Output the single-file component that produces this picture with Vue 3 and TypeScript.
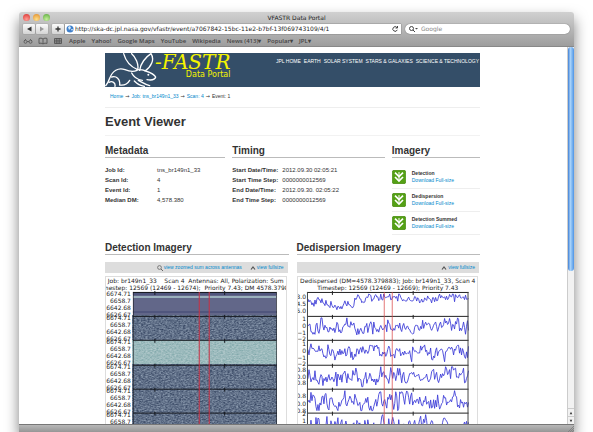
<script setup lang="ts">
interface TraceRow {
  top: number
  base: number
  amp: number
  seed: number
}

interface AxisLabel {
  y: number
  text: string
}

const bookmarks: string[] = ['Apple', 'Yahoo!', 'Google Maps', 'YouTube', 'Wikipedia', 'News (413)▾', 'Popular▾', 'JPL▾']
const siteLinks: string[] = ['JPL HOME', 'EARTH', 'SOLAR SYSTEM', 'STARS & GALAXIES', 'SCIENCE & TECHNOLOGY']

const metadata = [
  { label: 'Job Id:', value: 'tns_br149n1_33' },
  { label: 'Scan Id:', value: '4' },
  { label: 'Event Id:', value: '1' },
  { label: 'Median DM:', value: '4,578.380' },
]

const timing = [
  { label: 'Start Date/Time:', value: '2012.09.30 02:05:21' },
  { label: 'Start Time Step:', value: '0000000012569' },
  { label: 'End Date/Time:', value: '2012.09.30. 02:05:22' },
  { label: 'End Time Step:', value: '0000000012569' },
]

const downloads: string[] = ['Detection', 'Dedispersion', 'Detection Summed']

const detectionTitle: string[] = [
  'Job: br149n1_33    Scan 4  Antennas: All, Polarization: Sum',
  'mestep: 12569 (12469 - 12674);  Priority 7.43; DM 4578.3798',
]

const bandTops: number[] = [15, 39, 63, 88, 112, 136]
const bandLabels: AxisLabel[] = bandTops.flatMap((top) => [
  { y: top + 4, text: '6674.71' },
  { y: top + 11, text: '6658.7' },
  { y: top + 18, text: '6642.68' },
  { y: top + 25, text: '6626.67' },
])

const traceRows: TraceRow[] = [
  { top: 15, base: 12, amp: 5, seed: 11 },
  { top: 39, base: 11, amp: 9, seed: 27 },
  { top: 63, base: 12, amp: 8, seed: 35 },
  { top: 88, base: 12, amp: 10, seed: 48 },
  { top: 112, base: 13, amp: 12, seed: 59 },
  { top: 136, base: 14, amp: 12, seed: 63 },
]

const traceLabels: AxisLabel[] = [
  { y: 22, text: '3.0' }, { y: 29, text: '4.5' }, { y: 36, text: '5.0' },
  { y: 44, text: '1' }, { y: 51, text: '0' }, { y: 58, text: '−1' }, { y: 64, text: '−2' },
  { y: 69, text: '1' }, { y: 76, text: '0' }, { y: 83, text: '−1' }, { y: 89, text: '−2' },
  { y: 95, text: '0.8' }, { y: 102, text: '0.0' }, { y: 108, text: '−0.8' },
  { y: 121, text: '0.8' }, { y: 129, text: '0.0' }, { y: 136, text: '−0.8' },
  { y: 139, text: '2' }, { y: 146, text: '1' },
]

function tracePoints(row: TraceRow, index: number): string {
  let state = row.seed * 7919
  const random = (): number => {
    state = (state * 16807) % 2147483647
    return state / 2147483647
  }
  const points: string[] = []
  let previous = 0
  for (let x = 0; x <= 161; x += 1) {
    const value = (random() + random() + random() - 1.5) * row.amp
    previous = previous * 0.3 + value * 0.9
    let drift = 0
    if (index === 0) {
      drift = x < 47 ? Math.min(2, x / 8 - 2) : -5 + Math.sin(x / 14)
    }
    const offset = Math.max(2, Math.min(22, row.base + previous + drift))
    points.push(`${x + 10},${(row.top + offset).toFixed(1)}`)
  }
  return points.join(' ')
}

const traces: string[] = traceRows.map(tracePoints)
</script>

<template>
  <div class="desktop">
    <div class="window">
      <header class="chrome">
        <div class="titlebar">
          <div class="lights">
            <button class="light red" aria-label="Close"></button>
            <button class="light amber" aria-label="Minimize"></button>
            <button class="light green" aria-label="Zoom"></button>
          </div>
          <div class="window-title">VFASTR Data Portal</div>
        </div>
        <div class="toolbar">
          <div class="nav-buttons">
            <button class="tool" aria-label="Back"><svg viewBox="0 0 12 10"><path d="M8.500 2.500v5L4 5z" fill="#333" /></svg></button>
            <button class="tool" aria-label="Forward"><svg viewBox="0 0 12 10"><path d="M4 2.500v5L8 5z" fill="#999" /></svg></button>
          </div>
          <button class="tool add" aria-label="Add bookmark"><svg viewBox="0 0 12 10"><path d="M6 2.500v5M3.500 5h5" stroke="#333" stroke-width="1.300" /></svg></button>
          <div class="address">
            <svg class="globe" viewBox="0 0 8 8"><circle cx="4" cy="4" r="3.500" fill="#3f80cc" /><path d="M2 2l2-1 1 2-2 2zM5 4l2 0-1 2z" fill="#d9ecfa" /></svg>
            <input type="text" aria-label="Address" value="http://ska-dc.jpl.nasa.gov/vfastr/event/a7067842-15bc-11e2-b7bf-13f069743109/4/1" />
            <button class="reload" aria-label="Reload"><svg viewBox="0 0 8 8"><path d="M6 2.600A2.300 2.300 0 1 0 6.300 4.800M6.500 1v2H4.500" fill="none" stroke="#444" stroke-width="1" /></svg></button>
          </div>
          <div class="search">
            <svg viewBox="0 0 10 8"><circle cx="3.500" cy="3.500" r="2" fill="none" stroke="#444" /><path d="M5 5l2 2" stroke="#444" /><path d="M7 3h3L8.500 4.500z" fill="#444" /></svg>
            <input type="search" aria-label="Search" placeholder="Google" />
          </div>
        </div>
        <nav class="bookmarks">
          <svg class="mark-icon" viewBox="0 0 10 8"><path d="M1 4l2-2M9 4L7 2M4 4.500h2" fill="none" stroke="#555" stroke-width=".8" /><circle cx="2.500" cy="4.800" r="1.500" fill="none" stroke="#555" stroke-width=".8" /><circle cx="7.500" cy="4.800" r="1.500" fill="none" stroke="#555" stroke-width=".8" /></svg>
          <svg class="mark-icon" viewBox="0 0 10 8"><path d="M5 2C4 1 2 1 1 1.500v5C2 6 4 6 5 7c1-1 3-1 4-.5v-5C8 1 6 1 5 2zv5" fill="none" stroke="#555" stroke-width=".9" /></svg>
          <svg class="mark-icon" viewBox="0 0 10 8"><path d="M1.500 1.500h7v5h-7zM1.500 3.200h7M1.500 4.900h7M3.800 1v6M6.200 1v6" fill="none" stroke="#555" stroke-width=".9" /></svg>
          <a v-for="mark in bookmarks" :key="mark" href="#">{{ mark }}</a>
        </nav>
      </header>

      <div class="viewport">
        <main class="page">
          <div class="container">
            <div class="banner">
              <svg class="rabbit" viewBox="0 0 156 102" role="img" aria-label="Rabbit logo">
                <g fill="none" stroke="#fff" stroke-width="4" stroke-linecap="round" stroke-linejoin="round">
                  <path d="M56 2C62 24 78 42 98 50C102 34 92 12 80 2" />
                  <path d="M104 52C106 32 122 12 138 2C150 20 138 42 120 54" />
                  <path d="M96 50C104 50 114 50 122 54C134 58 148 64 152 72C150 80 138 82 126 80" />
                  <path d="M96 52C84 58 74 56 60 50C40 42 22 54 14 76C10 88 6 94 2 98" />
                  <path d="M20 72C34 68 46 78 44 94M12 88C22 82 32 90 30 100M44 96C56 98 68 92 74 82" />
                  <path d="M80 60C86 72 98 80 112 82M100 82C112 88 120 94 134 98M88 84C96 92 106 98 118 100" />
                </g>
                <circle cx="130" cy="65" r="3" fill="#fff" />
              </svg>
              <div class="brand">
                <span class="brand-name">-FASTR</span>
                <span class="brand-sub">Data Portal</span>
              </div>
              <nav class="site-links">
                <a v-for="link in siteLinks" :key="link" href="#">{{ link }}</a>
              </nav>
            </div>

            <nav class="crumbs">
              <a href="#">Home</a><span class="arrow">→</span>
              <a href="#">Job: tns_br149n1_33</a><span class="arrow">→</span>
              <a href="#">Scan: 4</a><span class="arrow">→</span>
              <span>Event: 1</span>
            </nav>

            <h1>Event Viewer</h1>

            <div class="details">
              <section>
                <h2>Metadata</h2>
                <dl class="meta-list">
                  <template v-for="item in metadata" :key="item.label">
                    <dt>{{ item.label }}</dt>
                    <dd>{{ item.value }}</dd>
                  </template>
                </dl>
              </section>
              <section>
                <h2>Timing</h2>
                <dl class="time-list">
                  <template v-for="item in timing" :key="item.label">
                    <dt>{{ item.label }}</dt>
                    <dd>{{ item.value }}</dd>
                  </template>
                </dl>
              </section>
              <section>
                <h2>Imagery</h2>
                <ul class="downloads">
                  <li v-for="name in downloads" :key="name">
                    <svg viewBox="0 0 42 42"><rect x="1" y="1" width="40" height="40" rx="5" fill="#54a015" stroke="#418508" stroke-width="2" /><path d="M9 8l12 12L33 8M9 21l12 12 12-12" fill="none" stroke="#fff" stroke-width="5" /><path d="M21 6v24" stroke="#fff" stroke-width="3" /></svg>
                    <div><strong>{{ name }}</strong><a href="#">Download Full-size</a></div>
                  </li>
                </ul>
              </section>
            </div>

            <div class="plots">
              <section>
                <h2>Detection Imagery</h2>
                <div class="plot-tools">
                  <a href="#"><svg viewBox="0 0 6 6"><circle cx="2.500" cy="2.500" r="1.900" fill="none" stroke="#666" stroke-width=".8" /><path d="M4 4l2 2" stroke="#666" /></svg>view zoomed sum across antennas</a>
                  <a href="#"><svg viewBox="0 0 6 6"><path d="M1 4.500l2-2.500 2 2.500" fill="none" stroke="#555" stroke-width="1.200" /></svg>view fullsize</a>
                </div>
                <div class="plot">
                  <svg viewBox="0 0 180 160" role="img" aria-label="Detection spectrogram">
                    <defs>
                      <filter id="grain" x="0" y="0" width="1" height="1" color-interpolation-filters="sRGB">
                        <feTurbulence type="fractalNoise" baseFrequency="0.45 0.8" numOctaves="2" seed="4" />
                        <feColorMatrix values="0.5 0 0 0 0.13  0.5 0 0 0 0.19  0.45 0 0 0 0.31  0 0 0 0 1" />
                      </filter>
                      <filter id="pale-grain" x="0" y="0" width="1" height="1" color-interpolation-filters="sRGB">
                        <feTurbulence type="fractalNoise" baseFrequency="0.45 0.8" numOctaves="2" seed="9" />
                        <feColorMatrix values="0.3 0 0 0 0.46  0.2 0 0 0 0.63  0.2 0 0 0 0.64  0 0 0 0 1" />
                      </filter>
                    </defs>
                    <g class="plot-text">
                      <text v-for="(line, i) in detectionTitle" :key="line" x="90" :y="6 + i * 7" text-anchor="middle">{{ line }}</text>
                      <text v-for="(label, i) in bandLabels" :key="i" x="25" :y="label.y" text-anchor="end">{{ label.text }}</text>
                    </g>
                    <rect x="27" y="15" width="144" height="24" fill="#626789" />
                    <path d="M27 17h144M27 35h144" stroke="#50567d" stroke-width="2" />
                    <path d="M27 20h144" stroke="#9ab0bc" stroke-width="2" />
                    <rect x="27" y="39" width="144" height="130" filter="url(#grain)" />
                    <rect x="27" y="64" width="144" height="23" filter="url(#pale-grain)" />
                    <path v-for="top in bandTops" :key="top" :d="`M27 ${top}.500h144M49 ${top - 1}v4M119 ${top - 1}v4`" stroke="#16191f" fill="none" />
                    <path d="M27.500 15v150M171 15v150" stroke="#16191f" stroke-width=".6" />
                    <path d="M93.500 15v150M103.500 15v150" stroke="#cb3043" />
                  </svg>
                </div>
              </section>
              <section>
                <h2>Dedispersion Imagery</h2>
                <div class="plot-tools">
                  <a href="#"><svg viewBox="0 0 6 6"><path d="M1 4.500l2-2.500 2 2.500" fill="none" stroke="#555" stroke-width="1.200" /></svg>view fullsize</a>
                </div>
                <div class="plot">
                  <svg viewBox="0 0 180 160" role="img" aria-label="Dedispersed time series">
                    <g class="plot-text">
                      <text x="90" y="6" text-anchor="middle">Dedispersed (DM=4578.379883); Job: br149n1_33, Scan 4</text>
                      <text x="90" y="13" text-anchor="middle">Timestep: 12569 (12469 - 12669); Priority 7.43</text>
                      <text v-for="(label, i) in traceLabels" :key="i" x="8" :y="label.y" text-anchor="end">{{ label.text }}</text>
                    </g>
                    <polyline v-for="(points, i) in traces" :key="i" :points="points" fill="none" stroke="#4040d8" stroke-width=".9" />
                    <path v-for="top in bandTops" :key="top" :d="`M9 ${top}.500h162M34.500 ${top - 1}v4M115.500 ${top - 1}v4`" stroke="#222" fill="none" />
                    <path d="M9.500 15v150M170.500 15v150" stroke="#444" />
                    <path d="M86.500 15v150M94.500 15v150" stroke="#d94a4a" stroke-opacity=".75" />
                  </svg>
                </div>
              </section>
            </div>
          </div>
        </main>
        <div class="scrollbar">
          <div class="track"><div class="thumb"></div></div>
          <button aria-label="Scroll up"><svg viewBox="0 0 7 7"><path d="M2 5h3L3.500 2z" fill="#333" /></svg></button>
          <button aria-label="Scroll down"><svg viewBox="0 0 7 7"><path d="M2 2h3L3.500 5z" fill="#333" /></svg></button>
        </div>
      </div>
      <footer class="statusbar"><svg viewBox="0 0 8 8"><path d="M1 8l7-7M3 8l5-5M5 8l3-3" stroke="#777" stroke-width=".7" /></svg></footer>
    </div>
  </div>
</template>

<style>
body {
  margin: 0;
  background: #fff;
}
</style>

<style scoped>
.desktop {
  box-sizing: border-box;
  height: 100vh;
  padding: 12px 19px 0;
  overflow: hidden;
  font-family: "Liberation Sans", Arial, sans-serif;
  font-size: 6px;
  line-height: 10px;
  color: #333;
}
button {
  padding: 0;
  border: 0;
  background: none;
}
input {
  min-width: 0;
  flex: 1;
  padding: 0;
  border: 0;
  outline: 0;
  background: none;
  font: 6px/8px "DejaVu Sans", sans-serif;
  color: #222;
}
svg {
  display: block;
}
a {
  color: #0088cc;
  text-decoration: none;
}
.window {
  display: flex;
  flex-direction: column;
  height: 100%;
  border-radius: 3px 3px 0 0;
  overflow: hidden;
  background: #fff;
  box-shadow: 0 7px 14px rgba(0, 0, 0, 0.5);
}
.chrome {
  flex: none;
  background: linear-gradient(#d0d0d0, #9d9d9d);
  border-bottom: 1px solid #888;
  font-family: "Open Sans", sans-serif;
}
.titlebar {
  display: grid;
  grid-template-columns: 1fr auto 1fr;
  align-items: center;
  height: 11px;
  padding: 0 4px;
}
.lights {
  display: flex;
  gap: 3px;
}
.light {
  width: 7px;
  height: 7px;
  border-radius: 50%;
}
.red {
  background: radial-gradient(circle at 50% 75%, #ff9c94, #d92f2c);
}
.amber {
  background: radial-gradient(circle at 50% 75%, #ffe08a, #e08a28);
}
.green {
  background: radial-gradient(circle at 50% 75%, #c5f09c, #58a83a);
}
.window-title {
  font-family: "DejaVu Sans", sans-serif;
  color: #222;
}
.toolbar {
  display: flex;
  align-items: center;
  gap: 4px;
  height: 12px;
  padding: 0 4px;
}
.nav-buttons {
  display: flex;
  gap: 1px;
}
.tool {
  width: 12px;
  height: 10px;
  border-radius: 1px;
  background: linear-gradient(#fafafa, #d4d4d4);
  box-shadow: 0 0 1px #555;
}
.address,
.search {
  display: flex;
  align-items: center;
  height: 10px;
  background: #fff;
  box-shadow: 0 0 1px #444;
}
.add {
  margin-right: -3px;
}
.address {
  flex: 335;
  gap: 1px;
  padding: 0 2px 0 1px;
}
.globe,
.reload {
  flex: none;
  width: 8px;
  height: 8px;
}
.search {
  flex: 160;
  gap: 3px;
  padding: 0 3px;
  border-radius: 5px;
}
.search svg {
  width: 10px;
  height: 8px;
}
.search input::placeholder {
  color: #888;
}
.bookmarks {
  display: flex;
  align-items: center;
  gap: 6px;
  height: 11px;
  padding: 0 4px;
}
.bookmarks a {
  color: #444;
  font-weight: 600;
  white-space: nowrap;
}
.mark-icon {
  width: 10px;
  height: 8px;
}
.mark-icon + .mark-icon {
  margin-left: -1px;
}
.viewport {
  display: flex;
  flex: 1;
  min-height: 0;
}
.page {
  flex: 1;
  height: 100%;
  padding-right: 1px;
  overflow: hidden;
}
.container {
  max-width: 375px;
  margin: 0 auto;
  padding-top: 6px;
}
.banner {
  display: flex;
  height: 34px;
  background: #344e68;
}
.rabbit {
  width: 52px;
  height: 34px;
}
.brand {
  display: flex;
  flex-direction: column;
  align-items: flex-end;
  margin-left: -2px;
  color: #f4f400;
}
.brand-name {
  font: italic 20px/18px "DejaVu Serif", serif;
}
.brand-sub {
  font: 8px/8px "DejaVu Sans", sans-serif;
}
.site-links {
  display: flex;
  gap: 3px;
  margin-left: auto;
  padding: 3px 1px;
  font-size: 5px;
  white-space: nowrap;
}
.site-links a {
  color: #fff;
}
.crumbs {
  display: flex;
  gap: 2px;
  padding: 4px 5px 6px;
  border-bottom: 1px solid #eee;
  font-size: 5px;
}
.arrow {
  font-family: "DejaVu Sans", sans-serif;
}
h1 {
  margin: 0;
  padding: 7px 0 6px;
  border-bottom: 1px solid #f2f2f2;
  font-size: 13px;
  line-height: 14px;
}
h2 {
  margin: 0 0 7px;
  border-bottom: 1px solid #bbb;
  font-size: 10px;
  line-height: 13px;
}
.details {
  display: grid;
  grid-template-columns: 120fr 152fr 88fr;
  gap: 7px;
  padding-top: 8px;
}
dl {
  display: grid;
  margin: 0;
}
.meta-list {
  grid-template-columns: 52px 1fr;
}
.time-list {
  grid-template-columns: 50px 1fr;
}
dt {
  font-weight: bold;
  white-space: nowrap;
}
dd {
  margin: 0;
}
.downloads {
  margin: 0;
  padding: 1px 0 0;
  list-style: none;
}
.downloads li {
  display: flex;
  gap: 6px;
  padding: 4px 0;
  border-bottom: 1px solid #eee;
  font-size: 5px;
  line-height: 7px;
}
.downloads svg {
  width: 14px;
  height: 14px;
}
.downloads strong,
.downloads a {
  display: block;
}
.plots {
  display: grid;
  grid-template-columns: 1fr 1fr;
  gap: 8px;
  padding-top: 6px;
}
.plot-tools {
  display: flex;
  justify-content: flex-end;
  gap: 8px;
  margin: 0 1px 3px 0;
  padding: 0 4px 0 0;
  background: #ddd;
  font-size: 5px;
  line-height: 11px;
}
.plot-tools a {
  display: flex;
  align-items: center;
  gap: 1px;
}
.plot-tools svg {
  width: 6px;
  height: 6px;
}
.plot {
  margin-right: 2px;
  border: 1px solid #ddd;
}
.plot > svg {
  width: 100%;
}
.plot-text {
  font-family: "DejaVu Sans", sans-serif;
  font-size: 6px;
  fill: #222;
}
.plot-text text {
  white-space: pre;
}
.scrollbar {
  display: flex;
  flex-direction: column;
  width: 7px;
  border-left: 1px solid #ccc;
  box-sizing: border-box;
  background: #f2f2f2;
}
.track {
  flex: 1;
}
.thumb {
  height: 62%;
  border-radius: 4px;
  background: linear-gradient(90deg, #3f7fd6, #a8d3fa 40%, #4d94e6);
}
.scrollbar button {
  height: 8px;
  border-top: 1px solid #ccc;
}
.statusbar {
  display: flex;
  justify-content: flex-end;
  flex: none;
  height: 7px;
  border-top: 1px solid #777;
  background: linear-gradient(#b8b8b8, #969696);
}
.statusbar svg {
  width: 8px;
  height: 8px;
}
</style>
